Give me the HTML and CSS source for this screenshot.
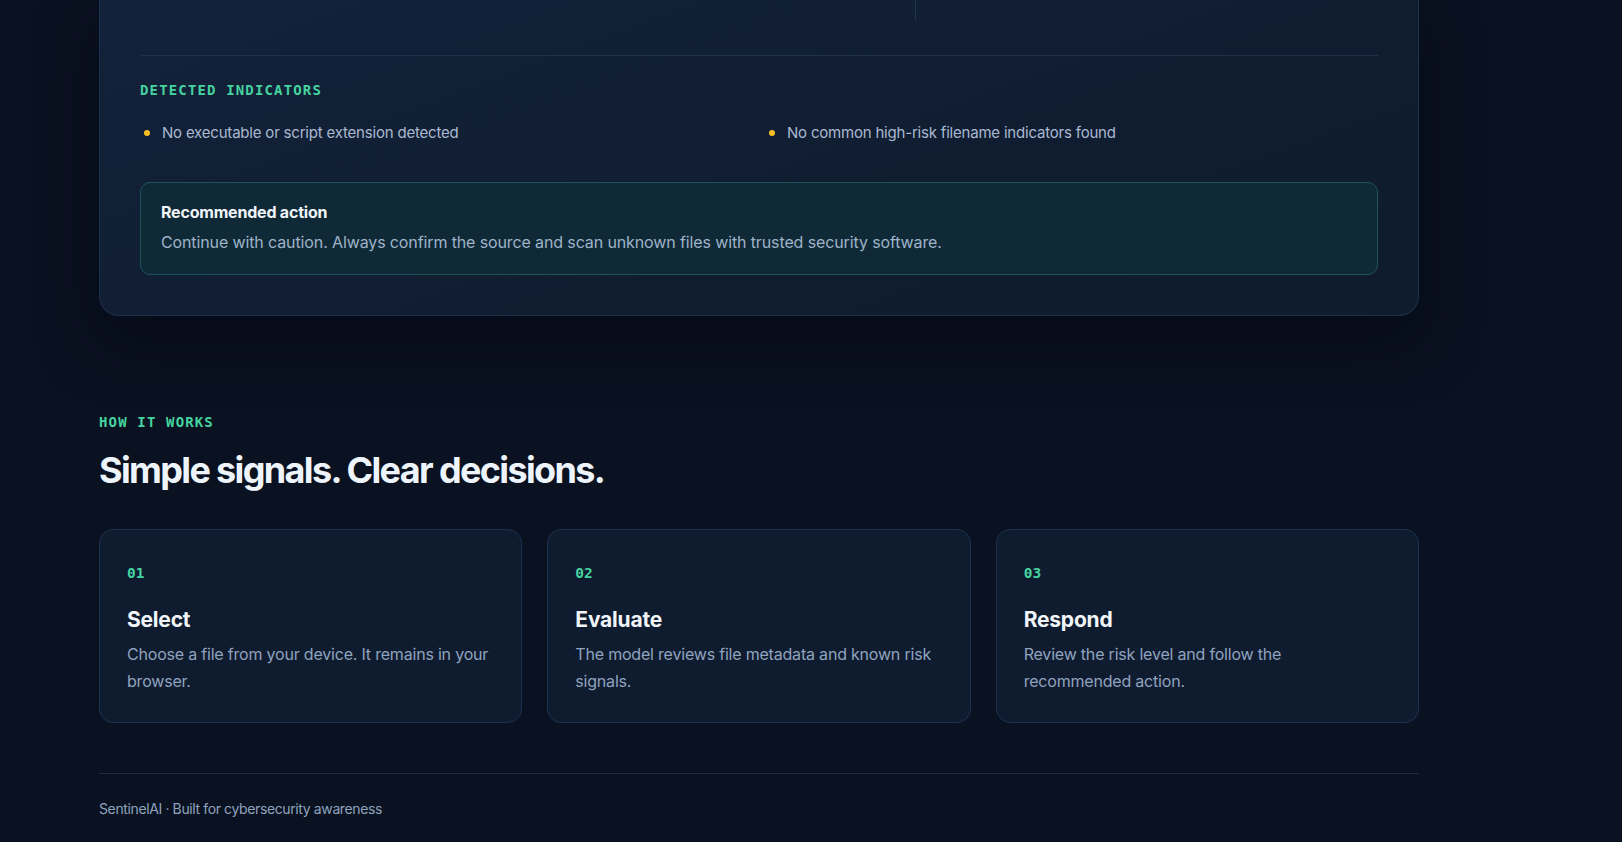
FILE: index.html
```html
<!DOCTYPE html>
<html lang="en">
<head>
<meta charset="utf-8">
<title>SentinelAI</title>
<link rel="stylesheet" href="styles.css">
</head>
<body>
<div class="page">
  <section class="result-panel">
    <div class="summary-row">
      <div class="summary-cell"></div>
      <div class="summary-cell summary-cell--divided"></div>
    </div>
    <div class="indicators">
      <h3 class="eyebrow">Detected indicators</h3>
      <ul class="indicator-list">
        <li>No executable or script extension detected</li>
        <li>No common high-risk filename indicators found</li>
      </ul>
    </div>
    <div class="recommendation">
      <div class="recommendation-title">Recommended action</div>
      <p class="recommendation-text">Continue with caution. Always confirm the source and scan unknown files with trusted security software.</p>
    </div>
  </section>

  <section class="how">
    <div class="eyebrow">How it works</div>
    <h2 class="how-title">Simple signals. Clear decisions.</h2>
    <div class="steps">
      <article class="step">
        <div class="step-num">01</div>
        <h4 class="step-title">Select</h4>
        <p class="step-text">Choose a file from your device. It remains in your<br>browser.</p>
      </article>
      <article class="step">
        <div class="step-num">02</div>
        <h4 class="step-title">Evaluate</h4>
        <p class="step-text">The model reviews file metadata and known risk<br>signals.</p>
      </article>
      <article class="step">
        <div class="step-num">03</div>
        <h4 class="step-title">Respond</h4>
        <p class="step-text">Review the risk level and follow the<br>recommended action.</p>
      </article>
    </div>
  </section>

  <footer class="footer">SentinelAI · Built for cybersecurity awareness</footer>
</div>
</body>
</html>
```

FILE: styles.css
```css
* { box-sizing: border-box; }

html, body {
  margin: 0;
  padding: 0;
  background: #0a1120;
}

body {
  font-family: "Inter", "Noto Sans", sans-serif;
  color: #a7b6cc;
  -webkit-font-smoothing: antialiased;
}

.page {
  width: 1320px;
  margin-left: 99px;
  padding-bottom: 30px;
}

/* Result panel */
.result-panel {
  background: linear-gradient(160deg, #13223a 0%, #101d31 60%, #0f1b2e 100%);
  border: 1px solid #1d3049;
  border-top: none;
  border-radius: 0 0 20px 20px;
  padding: 0 40px 40px;
  box-shadow: 0 24px 60px rgba(2, 6, 14, 0.55);
}

.summary-row {
  display: grid;
  grid-template-columns: 775px 1fr;
  height: 20px;
}

.summary-cell--divided {
  border-left: 1px solid #23354e;
}

.indicators {
  margin-top: 35px;
  border-top: 1px solid #1f3149;
  padding-top: 24px;
}

.eyebrow {
  margin: 0;
  font-family: "DejaVu Sans Mono", "Liberation Mono", monospace;
  font-size: 14px;
  line-height: 20px;
  font-weight: 700;
  letter-spacing: 1.15px;
  text-transform: uppercase;
  color: #45d3a0;
}

.indicator-list {
  list-style: none;
  margin: 21px 0 0;
  padding: 0;
  display: grid;
  grid-template-columns: 1fr 1fr;
  column-gap: 12px;
}

.indicator-list li {
  display: flex;
  align-items: center;
  gap: 12px;
  font-size: 15px;
  line-height: 24px;
  color: #a9b9d1;
  letter-spacing: -0.2px;
}

.indicator-list li::before {
  content: "";
  flex: none;
  width: 6px;
  height: 6px;
  margin-left: 4px;
  border-radius: 50%;
  background: #fbbf24;
}

.recommendation {
  margin-top: 37px;
  background: #0f2a36;
  border: 1px solid #1f5259;
  border-radius: 10px;
  padding: 17px 20px 20px;
}

.recommendation-title {
  font-size: 16px;
  line-height: 24px;
  font-weight: 700;
  color: #f1f5f9;
  letter-spacing: -0.2px;
}

.recommendation-text {
  margin: 6px 0 0;
  font-size: 16px;
  line-height: 24px;
  color: #9fb3c9;
  letter-spacing: -0.12px;
}

/* How it works */
.how {
  margin-top: 96px;
}

.how-title {
  margin: 17px 0 0;
  font-size: 36px;
  line-height: 42px;
  font-weight: 700;
  letter-spacing: -1.65px;
  color: #eef4fb;
}

.steps {
  margin-top: 38px;
  display: grid;
  grid-template-columns: repeat(3, 1fr);
  gap: 25px;
}

.step {
  background: #0f1c30;
  border: 1px solid #1c3150;
  border-radius: 14px;
  padding: 31px 27px 27px;
}

.step-num {
  font-family: "DejaVu Sans Mono", "Liberation Mono", monospace;
  font-size: 14.5px;
  line-height: 24px;
  font-weight: 700;
  color: #45d3a0;
}

.step-title {
  margin: 21px 0 0;
  font-size: 21px;
  line-height: 28px;
  font-weight: 700;
  color: #f1f5f9;
  letter-spacing: -0.2px;
}

.step-text {
  margin: 7px 0 0;
  font-size: 16px;
  line-height: 27.2px;
  color: #8fa3be;
  letter-spacing: -0.2px;
}

/* Footer */
.footer {
  margin-top: 50px;
  border-top: 1px solid #1c2c44;
  padding-top: 25px;
  font-size: 14px;
  line-height: 20px;
  color: #8fa3be;
  letter-spacing: -0.38px;
}
```
